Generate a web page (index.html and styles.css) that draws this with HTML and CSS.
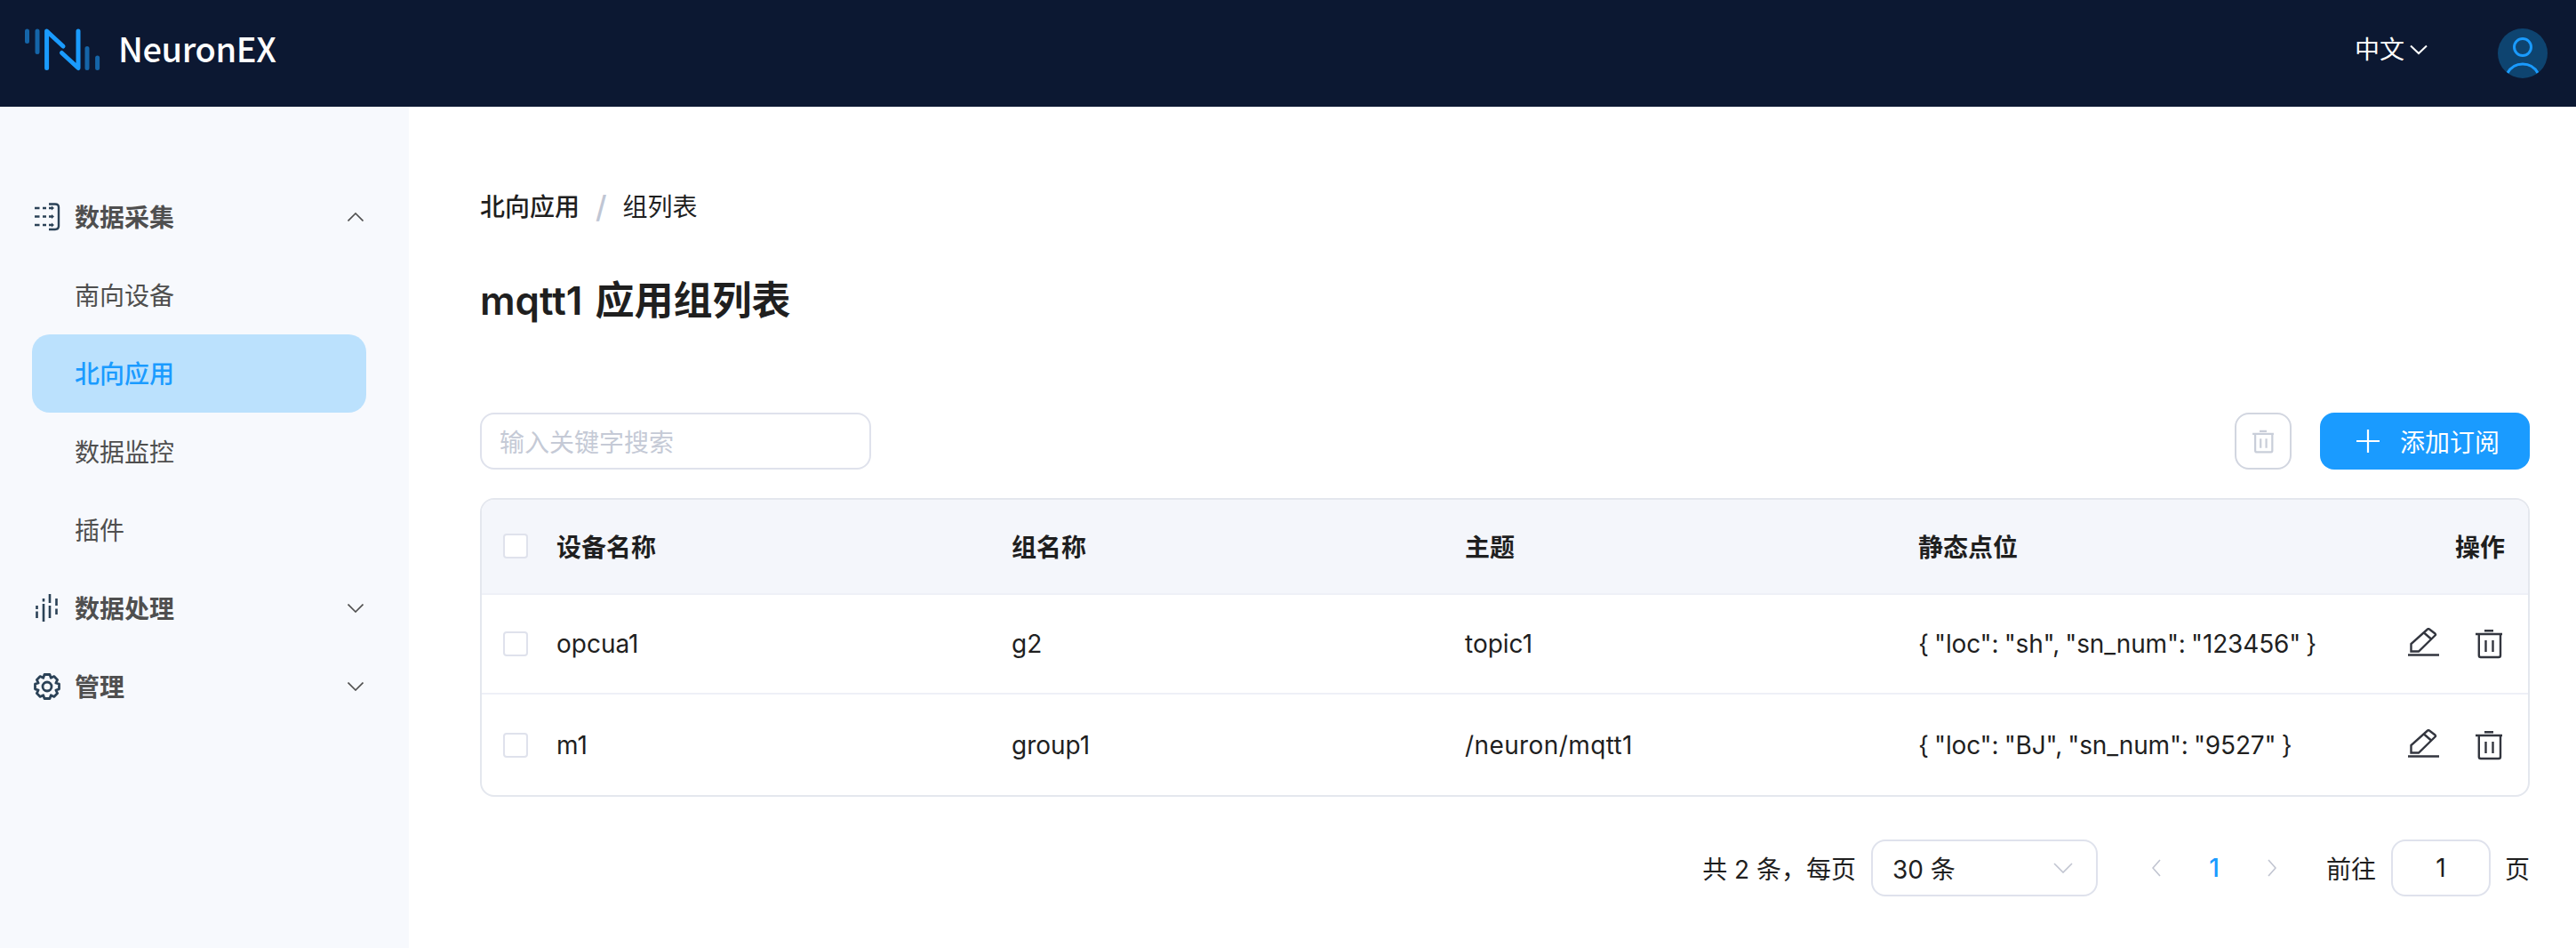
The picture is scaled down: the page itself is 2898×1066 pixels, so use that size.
FILE: index.html
```html
<!DOCTYPE html>
<html lang="zh-CN">
<head>
<meta charset="utf-8">
<title>NeuronEX</title>
<link rel="stylesheet" href="styles.css">
</head>
<body>
<div class="app">
  <header class="topbar">
    <div class="brand">
      <svg class="logo" width="96" height="60" viewBox="0 0 96 60" fill="none" stroke-linecap="round">
        <path d="M2.5 5V16.5M14 5V28.5" stroke="#1565a8" stroke-width="5"/>
        <path d="M24.6 46.5V5L43 22M41.5 29.5L60 46.5V5" stroke="#1a9bff" stroke-width="5" stroke-linejoin="round"/>
        <path d="M70 24.5V46.5M81.6 35V46.5" stroke="#1565a8" stroke-width="5"/>
      </svg>
      <span class="brand-name">NeuronEX</span>
    </div>
    <div class="top-right">
      <div class="lang">
        <span>中文</span>
        <svg width="20" height="12" viewBox="0 0 20 12" fill="none" stroke="#fff" stroke-width="2"><path d="M1 1.5L10 10L19 1.5"/></svg>
      </div>
      <svg class="avatar" width="56" height="56" viewBox="0 0 56 56" fill="none">
        <defs><clipPath id="ac"><circle cx="28" cy="28" r="28"/></clipPath></defs>
        <circle cx="28" cy="28" r="28" fill="#0e4470"/>
        <circle cx="28" cy="21" r="9.5" stroke="#1a9bff" stroke-width="3"/>
        <path d="M11 50C15 43 21 40 28 40S41 43 45 50" stroke="#1a9bff" stroke-width="3" clip-path="url(#ac)"/>
      </svg>
    </div>
  </header>
  <div class="body">
    <aside class="sidebar">
      <nav class="menu">
        <div class="menu-item group">
          <svg class="mi" width="30" height="32" viewBox="0 0 30 32" fill="none" stroke="#2b4257" stroke-width="2.4">
            <path d="M17 1.5H24Q28 1.5 28 5V26Q28 30 24 30H17"/>
            <path d="M1 6H6.5M10 6H14M17 6H20M1 15.5H6.5M10 15.5H14M17 15.5H20M1 25H6.5M10 25H14M17 25H20"/>
            <path d="M20 3.5L23 6L20 8.5ZM20 13L23 15.5L20 18ZM20 22.5L23 25L20 27.5Z" fill="#2b4257" stroke="none"/>
          </svg>
          <span class="label">数据采集</span>
          <svg class="chev" width="18" height="10" viewBox="0 0 18 10" fill="none" stroke="#4f4f4f" stroke-width="1.6"><path d="M.5 9.5L9 1L17.5 9.5"/></svg>
        </div>
        <div class="menu-item sub">南向设备</div>
        <div class="menu-item sub active">北向应用</div>
        <div class="menu-item sub">数据监控</div>
        <div class="menu-item sub">插件</div>
        <div class="menu-item group">
          <svg class="mi" width="30" height="32" viewBox="0 0 30 32" fill="none" stroke="#2b4257" stroke-width="2.6">
            <path d="M3.5 13V17M3.5 19.5V27M11 5V8.5M11 11V31M18 0V10M18 13V27M25.5 5V13M25.5 16.5V23"/>
          </svg>
          <span class="label">数据处理</span>
          <svg class="chev" width="18" height="10" viewBox="0 0 18 10" fill="none" stroke="#4f4f4f" stroke-width="1.6"><path d="M.5.5L9 9L17.5.5"/></svg>
        </div>
        <div class="menu-item group">
          <svg class="mi" width="30" height="30" viewBox="0 0 30 30" fill="none" stroke="#2b4257" stroke-width="2.8" stroke-linejoin="round">
            <path d="M12 1.5H18L19.3 5.3L22.8 3.6L26.6 7.4L24.9 11L28.5 12.2V17.8L24.9 19L26.6 22.6L22.8 26.4L19.3 24.7L18 28.5H12L10.7 24.7L7.2 26.4L3.4 22.6L5.1 19L1.5 17.8V12.2L5.1 11L3.4 7.4L7.2 3.6L10.7 5.3Z"/>
            <circle cx="15" cy="15" r="5"/>
          </svg>
          <span class="label">管理</span>
          <svg class="chev" width="18" height="10" viewBox="0 0 18 10" fill="none" stroke="#4f4f4f" stroke-width="1.6"><path d="M.5.5L9 9L17.5.5"/></svg>
        </div>
      </nav>
    </aside>
    <main class="main">
      <div class="breadcrumb">
        <span class="crumb-link">北向应用</span>
        <span class="crumb-sep">/</span>
        <span>组列表</span>
      </div>
      <h1 class="title">mqtt1 应用组列表</h1>
      <div class="toolbar">
        <div class="search">输入关键字搜索</div>
        <div class="actions">
          <button class="icon-btn">
            <svg width="24" height="27" viewBox="0 0 30 34" fill="none" stroke="#c9ced9" stroke-width="2.8"><use href="#trash"/></svg>
          </button>
          <button class="primary">
            <svg width="26" height="26" viewBox="0 0 26 26" fill="none" stroke="#fff" stroke-width="2.2"><path d="M13 0V26M0 13H26"/></svg>
            <span>添加订阅</span>
          </button>
        </div>
      </div>
      <div class="table">
        <div class="row head">
          <span class="check"></span>
          <span>设备名称</span><span>组名称</span><span>主题</span><span>静态点位</span>
          <span class="op-head">操作</span>
        </div>
        <div class="row">
          <span class="check"></span>
          <span>opcua1</span><span>g2</span><span>topic1</span><span class="json">{ "loc": "sh", "sn_num": "123456" }</span>
          <span class="ops">
            <svg width="36" height="36" viewBox="0 0 36 36" fill="none" stroke="#33363f" stroke-width="2.4"><use href="#pen"/></svg>
            <svg width="30" height="34" viewBox="0 0 30 34" fill="none" stroke="#33363f" stroke-width="2.4"><use href="#trash"/></svg>
          </span>
        </div>
        <div class="row last">
          <span class="check"></span>
          <span>m1</span><span>group1</span><span class="path">/neuron/mqtt1</span><span class="json">{ "loc": "BJ", "sn_num": "9527" }</span>
          <span class="ops">
            <svg width="36" height="36" viewBox="0 0 36 36" fill="none" stroke="#33363f" stroke-width="2.4"><use href="#pen"/></svg>
            <svg width="30" height="34" viewBox="0 0 30 34" fill="none" stroke="#33363f" stroke-width="2.4"><use href="#trash"/></svg>
          </span>
        </div>
      </div>
      <div class="pager">
        <span class="total">共 2 条，每页</span>
        <div class="select">
          <span>30 条</span>
          <svg width="22" height="12" viewBox="0 0 22 12" fill="none" stroke="#c0c4d0" stroke-width="1.6"><path d="M1 1L11 11L21 1"/></svg>
        </div>
        <svg class="pg-arrow first" width="10" height="20" viewBox="0 0 10 20" fill="none" stroke="#c0c4d0" stroke-width="1.6"><path d="M9 1L1 10L9 19"/></svg>
        <span class="page-num">1</span>
        <svg class="pg-arrow" width="10" height="20" viewBox="0 0 10 20" fill="none" stroke="#c0c4d0" stroke-width="1.6"><path d="M1 1L9 10L1 19"/></svg>
        <span class="goto">前往</span>
        <div class="page-input">1</div>
        <span>页</span>
      </div>
    </main>
  </div>
</div>
<svg class="defs" width="0" height="0">
  <defs>
    <g id="trash"><path d="M0 6H30M10 2.3H20M3.8 6V30Q3.8 32 5.8 32H26Q28 32 28 30V6M11.5 13V26M19.5 13V26"/></g>
    <g id="pen"><path d="M3.5 26.5V18L22 1.5Q23 .8 24 1.5L30.5 6.5Q31.5 7.5 30.5 8.5L12 26.5ZM18 5.5L26 12.5M0 30.5H35"/></g>
  </defs>
</svg>
</body>
</html>
```
FILE: styles.css
```css
* { box-sizing: border-box; }
html, body { margin: 0; height: 100%; }
body {
  font-family: Inter, "Noto Sans CJK SC", sans-serif;
  font-size: 28px;
  color: #1f1f1f;
  background: #fff;
  overflow: hidden;
}
.defs { position: absolute; }
.app { display: flex; flex-direction: column; height: 100vh; }
.topbar {
  height: 120px;
  flex: none;
  background: #0c1832;
  display: flex;
  align-items: center;
  justify-content: space-between;
  padding: 0 32px 0 28px;
}
.brand { display: flex; align-items: center; gap: 9px; }
.brand-name {
  font-family: "Noto Sans CJK SC", sans-serif;
  font-size: 38px;
  font-weight: 500;
  letter-spacing: -0.4px;
  color: #fff;
  line-height: 56px;
  padding-bottom: 12px;
}
.top-right { display: flex; align-items: center; gap: 79px; }
.lang { display: flex; align-items: center; gap: 6px; color: #fff; line-height: 40px; padding-bottom: 8px; }
.body { flex: 1; display: flex; min-height: 0; }
.sidebar { width: 460px; flex: none; background: #f7f9fd; padding: 80px 48px 0 36px; }
.menu { display: flex; flex-direction: column; }
.menu-item {
  height: 88px;
  display: flex;
  align-items: center;
  color: #4f4f4f;
  padding-left: 48px;
  padding-bottom: 2px;
  border-radius: 20px;
}
.menu-item.group { font-weight: 600; padding: 0 3px 2px 2px; }
.mi { width: 30px; margin: 2px 16px 0 0; flex: none; }
.chev { margin-top: 2px; }
.label { flex: 1; }
.menu-item.active { background: #bbe1fd; color: #1a9bff; font-weight: 500; }
.main { flex: 1; min-width: 0; padding: 93px 52px 0 80px; }
.breadcrumb { display: flex; align-items: center; line-height: 40px; height: 40px; }
.crumb-link { font-weight: 500; }
.crumb-sep { color: #c0c6d4; margin: 0 18px; font-size: 34px; font-weight: 500; }
.title { margin: 55px 0 96px; font-size: 44px; font-weight: 600; line-height: 60px; word-spacing: 3px; }
.toolbar { display: flex; justify-content: space-between; height: 64px; }
.search {
  width: 440px;
  border: 2px solid #dfe2ec;
  border-radius: 16px;
  color: #c5cad6;
  padding-left: 20px;
  display: flex;
  align-items: center;
}
.actions { display: flex; gap: 32px; }
.icon-btn {
  width: 64px;
  border: 2px solid #d2d6e0;
  border-radius: 16px;
  background: #fff;
  padding: 0;
  display: flex;
  align-items: center;
  justify-content: center;
}
.primary {
  width: 236px;
  border: 0;
  border-radius: 16px;
  background: #1a9bff;
  color: #fff;
  font: inherit;
  padding: 0 0 0 41px;
  display: flex;
  align-items: center;
  gap: 23px;
}
.table {
  margin-top: 32px;
  border: 2px solid #e4e7ee;
  border-radius: 16px;
  overflow: hidden;
}
.row {
  display: grid;
  grid-template-columns: 84px 512px 510px 510px 1fr 180px;
  align-items: center;
  height: 112px;
  border-bottom: 2px solid #eef0f7;
}
.row.last { height: 113px; border-bottom: 0; }
.row.head { height: 107px; padding-bottom: 2px; background: #f4f6fb; font-weight: 600; }
.json { word-spacing: -1.5px; letter-spacing: -0.15px; }
.path { letter-spacing: 0.4px; }
.check {
  width: 28px;
  height: 28px;
  margin-left: 24px;
  background: #fff;
  border: 2px solid #dfe2ec;
  border-radius: 4px;
}
.op-head { text-align: right; padding-right: 26px; }
.ops { display: flex; justify-content: flex-end; align-items: center; gap: 40px; padding-right: 29px; }
.pager {
  margin-top: 48px;
  height: 64px;
  display: flex;
  align-items: center;
  justify-content: flex-end;
}
.select {
  width: 255px;
  height: 64px;
  margin-left: 17px;
  border: 2px solid #dfe2ec;
  border-radius: 16px;
  display: flex;
  align-items: center;
  justify-content: space-between;
  padding: 0 26px 0 22px;
}
.pg-arrow.first { margin-left: 61px; }
.page-num { width: 120px; text-align: center; color: #1a9bff; font-weight: 500; }
.goto { margin-left: 56px; }
.page-input {
  width: 112px;
  height: 64px;
  margin: 0 16px 0 17px;
  border: 2px solid #dfe2ec;
  border-radius: 16px;
  display: flex;
  align-items: center;
  justify-content: center;
}
```
